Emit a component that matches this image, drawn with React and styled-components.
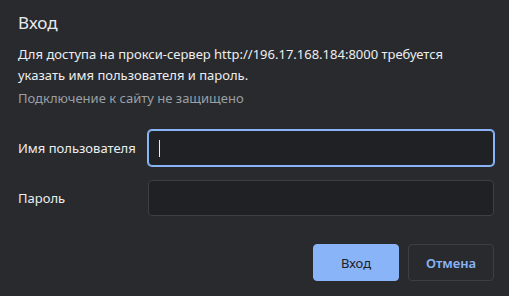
import React from "react";
import styled, { createGlobalStyle } from "styled-components";

const Global = createGlobalStyle`
  html, body { margin: 0; padding: 0; background: #292a2d; }
  * { box-sizing: border-box; }
`;

const Dialog = styled.div`
  width: 509px;
  height: 296px;
  background: #292a2d;
  color: #e8eaed;
  font-family: "Noto Sans", "Open Sans", sans-serif;
  padding: 11px 15px 0 18px;
  display: flex;
  flex-direction: column;
`;

const Title = styled.h1`
  margin: 0;
  font-size: 17px;
  font-weight: 400;
  line-height: 24px;
  color: #e8eaed;
`;

const Message = styled.p`
  margin: 9px 0 0;
  font-size: 13px;
  line-height: 21px;
  color: #eceef0;
  white-space: nowrap;
`;

const Note = styled.p`
  margin: 3px 0 0;
  font-size: 13px;
  line-height: 18px;
  color: #9aa0a6;
`;

const Form = styled.div`
  margin-top: 23px;
  display: grid;
  grid-template-columns: 130px 1fr;
  row-gap: 14px;
  align-items: center;
`;

const Label = styled.label`
  font-size: 13px;
  color: #eceef0;
`;

const Field = styled.div`
  height: 36px;
  background: #202124;
  border: 1px solid ${(p) => (p.$focused ? "#8ab4f8" : "#3c4043")};
  box-shadow: ${(p) => (p.$focused ? "0 0 0 1px #8ab4f8" : "none")};
  border-radius: 4px;
  display: flex;
  align-items: center;
  padding-left: 10px;
`;

const Caret = styled.span`
  width: 1px;
  height: 17px;
  background: #e8eaed;
`;

const Actions = styled.div`
  margin-top: 28px;
  display: flex;
  justify-content: flex-end;
  gap: 9px;
`;

const Button = styled.button`
  height: 37px;
  width: 86px;
  border-radius: 4px;
  font-family: inherit;
  font-size: 13px;
  font-weight: ${(p) => (p.$primary ? 400 : 600)};
  background: ${(p) => (p.$primary ? "#8ab4f8" : "transparent")};
  color: ${(p) => (p.$primary ? "#202124" : "#8ab4f8")};
  border: 1px solid ${(p) => (p.$primary ? "#8ab4f8" : "#3c4043")};
  padding: 0;
`;

export default function App() {
  return (
    <>
      <Global />
      <Dialog>
        <Title>Вход</Title>
        <Message>
          Для доступа на прокси-сервер http://196.17.168.184:8000 требуется
          <br />
          указать имя пользователя и пароль.
        </Message>
        <Note>Подключение к сайту не защищено</Note>
        <Form>
          <Label>Имя пользователя</Label>
          <Field $focused>
            <Caret />
          </Field>
          <Label>Пароль</Label>
          <Field />
        </Form>
        <Actions>
          <Button $primary>Вход</Button>
          <Button>Отмена</Button>
        </Actions>
      </Dialog>
    </>
  );
}
